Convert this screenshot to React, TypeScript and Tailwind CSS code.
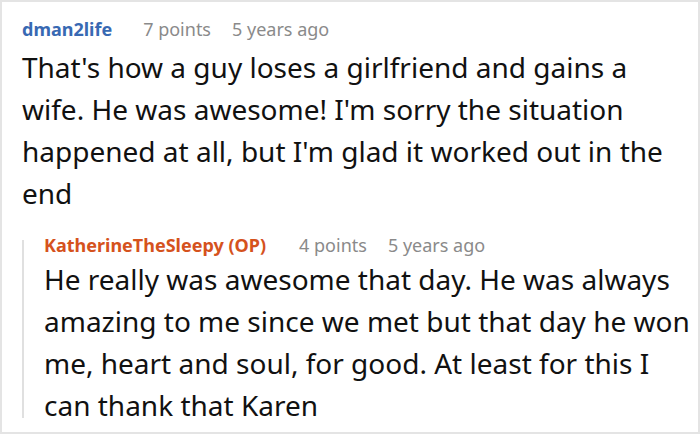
const font = { fontFamily: '"Noto Sans", "Open Sans", sans-serif' };

function Meta({ points, age }: { points: string; age: string }) {
  return (
    <>
      <span className="ml-[31px] text-[#8a8a8a]">{points}</span>
      <span className="ml-[21px] text-[#8a8a8a]">{age}</span>
    </>
  );
}

export default function App() {
  return (
    <div className="w-[700px] h-[436px] bg-white overflow-hidden" style={font}>
      <div className="h-[434px] border-2 border-[#e4e4e4] pl-[20px] pr-[12px] pt-[15px]">
        {/* top-level comment */}
        <div className="flex items-baseline text-[18px] leading-[24px]">
          <span className="font-bold text-[#3869b3]">dman2life</span>
          <Meta points="7 points" age="5 years ago" />
        </div>
        <p className="text-[28px] leading-[42px] text-[#111] mt-[5px]">
          That's how a guy loses a girlfriend and gains a wife. He was awesome! I'm sorry the situation happened at all, but I'm glad it worked out in the end
        </p>

        {/* reply */}
        <div className="flex mt-[19px] mr-[-10px]">
          <div className="w-[2px] bg-[#e0e0e0] mt-[7px] mb-[8px] shrink-0" />
          <div className="pl-[20px]">
            <div className="flex items-baseline text-[18px] leading-[24px]">
              <span className="font-bold text-[#d5521d]">KatherineTheSleepy (OP)</span>
              <span className="ml-[33px] text-[#8a8a8a]">4 points</span>
              <span className="ml-[21px] text-[#8a8a8a]">5 years ago</span>
            </div>
            <p className="text-[28px] leading-[42px] text-[#111] mt-[1px]">
              He really was awesome that day. He was always amazing to me since we met but that day he won me, heart and soul, for good. At least for this I can thank that Karen
            </p>
          </div>
        </div>
      </div>
    </div>
  );
}
